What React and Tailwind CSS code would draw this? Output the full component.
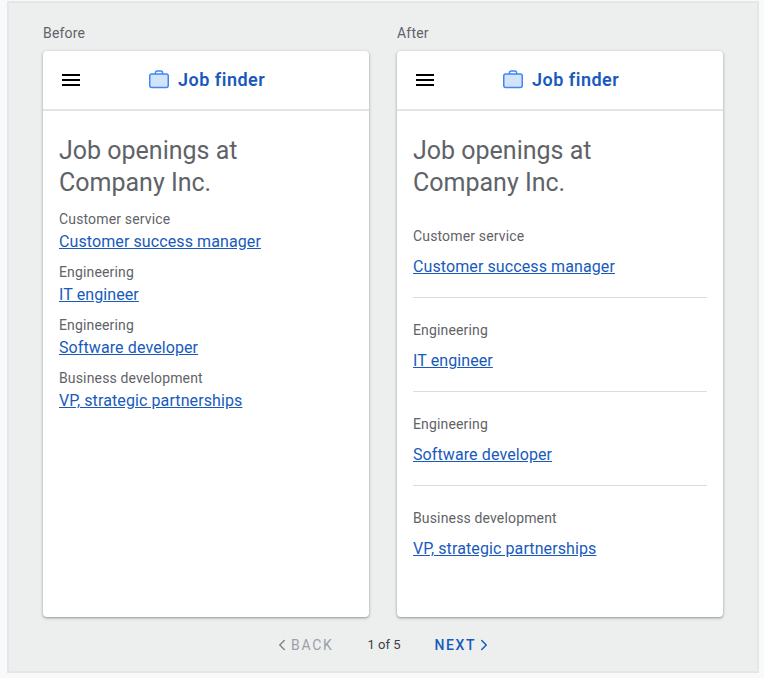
import { ChevronLeft, ChevronRight } from "lucide-react";

const jobs = [
  { team: "Customer service", title: "Customer success manager" },
  { team: "Engineering", title: "IT engineer" },
  { team: "Engineering", title: "Software developer" },
  { team: "Business development", title: "VP, strategic partnerships" },
];

function Briefcase() {
  return (
    <svg width="20" height="20" viewBox="0 0 20 20" fill="none">
      <path d="M6.5 5V3.6C6.5 2.7 7.1 2 8 2h4c.9 0 1.5.7 1.5 1.6V5" stroke="#4285f4" strokeWidth="1.5" />
      <rect x="0.75" y="5" width="18.5" height="13.5" rx="2" fill="#d2e3fc" stroke="#4285f4" strokeWidth="1.5" />
    </svg>
  );
}

function Hamburger() {
  return (
    <svg width="18" height="14" viewBox="0 0 18 14" className="text-black">
      <rect y="1" width="18" height="2" fill="currentColor" />
      <rect y="6" width="18" height="2" fill="currentColor" />
      <rect y="11" width="18" height="2" fill="currentColor" />
    </svg>
  );
}

function PhoneHeader() {
  return (
    <div className="flex h-[60px] items-center border-b-2 border-[#e2e4e6] pl-[19px]">
      <Hamburger />
      <div className="mb-[2px] ml-[69px] flex items-center gap-[9px]">
        <Briefcase />
        <span className="text-[18px] font-semibold tracking-[0.5px] text-[#185abc]">Job finder</span>
      </div>
    </div>
  );
}

function Phone({ after }) {
  return (
    <div className="h-[566px] w-[326px] rounded-[4px] bg-white shadow-[0_1px_2px_rgba(60,64,67,0.35),0_1px_3px_1px_rgba(60,64,67,0.15)]">
      <PhoneHeader />
      <div className="px-4 pt-6">
        <h1 className="text-[25px] leading-8 text-[#5f6368]">
          Job openings at
          <br />
          Company Inc.
        </h1>
        {after ? (
          <div className="mt-[27px]">
            {jobs.map((job, i) => (
              <div key={i} className={i < 3 ? "mb-[22px] border-b border-[#dadce0] pb-[20px]" : ""}>
                <div className="text-[14px] leading-5 tracking-[0.15px] text-[#5f6368]">{job.team}</div>
                <a className="mt-[11px] block text-[16px] leading-5 tracking-[0.1px] text-[#185abc] underline">{job.title}</a>
              </div>
            ))}
          </div>
        ) : (
          <div className="mt-[10px] flex flex-col gap-[9px]">
            {jobs.map((job, i) => (
              <div key={i}>
                <div className="text-[14px] leading-5 tracking-[0.15px] text-[#5f6368]">{job.team}</div>
                <a className="mt-[2px] block text-[16px] leading-[22px] tracking-[0.1px] text-[#185abc] underline">{job.title}</a>
              </div>
            ))}
          </div>
        )}
      </div>
    </div>
  );
}

export default function App() {
  return (
    <div className="h-[678px] w-[764px] bg-[#f8f9fa] pl-[7px] pt-[1px] font-['Roboto',sans-serif]">
      <div className="h-[672px] w-[752px] border-2 border-[#e4e6e7] bg-[#edefef] pl-[34px] pt-[21px]">
        <div className="flex gap-7">
          <div>
            <div className="mb-[9px] text-[14px] leading-[18px] tracking-[0.2px] text-[#5f6368]">Before</div>
            <Phone />
          </div>
          <div>
            <div className="mb-[9px] text-[14px] leading-[18px] tracking-[0.2px] text-[#5f6368]">After</div>
            <Phone after />
          </div>
        </div>
        <div className="mt-[16px] flex h-6 items-center pl-[230px]">
          <ChevronLeft size={18} className="text-[#80868b]" />
          <span className="text-[14px] tracking-[1.7px] text-[#9aa0a6]">BACK</span>
          <span className="ml-[34px] text-[13px] text-[#3c4043]">1 of 5</span>
          <span className="ml-[34px] text-[14px] font-medium tracking-[1.6px] text-[#185abc]">NEXT</span>
          <ChevronRight size={18} className="-ml-[1px] text-[#185abc]" />
        </div>
      </div>
    </div>
  );
}
